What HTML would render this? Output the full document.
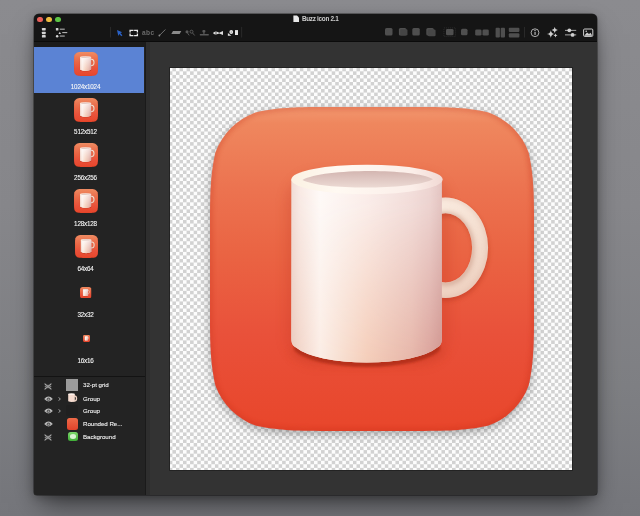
<!DOCTYPE html>
<html><head><meta charset="utf-8">
<style>
*{margin:0;padding:0;box-sizing:border-box}
html,body{width:640px;height:516px;overflow:hidden}
body{position:relative;font-family:"Liberation Sans",sans-serif;background:linear-gradient(180deg,#8b8b8f 0%,#87878b 40%,#7e7f83 75%,#75767b 100%)}
.abs{position:absolute}
#win{left:34px;top:14px;width:563px;height:481px;border-radius:5px 5px 3px 3px;background:#333;box-shadow:0 14px 26px -6px rgba(0,0,0,.55),0 2px 10px rgba(0,0,0,.25),0 0 0 0.5px rgba(0,0,0,.6);overflow:hidden}
#tb{left:0;top:0;width:563px;height:28px;background:#151515;border-bottom:1px solid #0b0b0b}
.tl{width:5.7px;height:5.7px;border-radius:50%}
#side{left:0;top:28px;width:111px;height:453px;background:#232323}
#sidetop{left:0;top:0;width:111px;height:5px;background:#1b1b1b}
#sel{left:0;top:5px;width:110px;height:46px;background:#5b83d4}
#divider{left:110.5px;top:28px;width:5px;height:453px;background:#2e2e2e;border-left:0.5px solid #1a1a1a}
#canvas{left:136px;top:54px;width:402px;height:402px;background-color:#fdfdfd;box-shadow:0 0 0 1px rgba(0,0,0,.3)}
#bigicon{left:39.5px;top:38.5px;width:324px;height:324px;filter:drop-shadow(0 3px 5px rgba(0,0,0,.3))}
.lbl{color:#f6f6f6;font-size:6.3px;letter-spacing:-0.2px;text-align:center;width:103px;left:0;line-height:8px;white-space:nowrap;-webkit-text-stroke:0.1px #f6f6f6;will-change:transform}
.lyr{color:#f0f0f0;font-size:6.2px;left:49.1px;line-height:8px;white-space:nowrap;-webkit-text-stroke:0.1px #f0f0f0;letter-spacing:-0.05px;will-change:transform}
</style></head><body>
<svg width="0" height="0" style="position:absolute">
<defs>
<linearGradient id="gBg" x1="0" y1="0" x2="0" y2="1">
<stop offset="0" stop-color="#f2976f"/><stop offset="0.05" stop-color="#ef875e"/><stop offset="0.25" stop-color="#ec7350"/><stop offset="0.45" stop-color="#ea6443"/><stop offset="0.7" stop-color="#e9513a"/><stop offset="1" stop-color="#e8462b"/>
</linearGradient>
<linearGradient id="gBody" x1="0" y1="0" x2="1" y2="0">
<stop offset="0" stop-color="#f1ddd6"/><stop offset="0.06" stop-color="#f9ebe6"/><stop offset="0.19" stop-color="#fefaf8"/><stop offset="0.5" stop-color="#fbefec"/><stop offset="0.8" stop-color="#f3dfdc"/><stop offset="0.92" stop-color="#eed6d3"/><stop offset="1" stop-color="#e4c6c3"/>
</linearGradient>
<linearGradient id="gBodyB" x1="0" y1="0" x2="1" y2="0">
<stop offset="0" stop-color="#eacabe"/><stop offset="0.06" stop-color="#f2d6ca"/><stop offset="0.19" stop-color="#fbece4"/><stop offset="0.35" stop-color="#f7dccd"/><stop offset="0.5" stop-color="#f4cdb9"/><stop offset="0.8" stop-color="#e6b5a8"/><stop offset="0.92" stop-color="#dba39b"/><stop offset="1" stop-color="#d0958f"/>
</linearGradient>
<linearGradient id="gMaskV" x1="0" y1="0" x2="0" y2="1">
<stop offset="0" stop-color="#000"/><stop offset="0.15" stop-color="#111"/><stop offset="1" stop-color="#fff"/>
</linearGradient>
<mask id="mBodyB" maskUnits="userSpaceOnUse" x="0" y="0" width="324" height="324"><rect x="81" y="72.5" width="152" height="184" fill="url(#gMaskV)"/></mask>
<linearGradient id="gRim" x1="0" y1="0" x2="1" y2="0">
<stop offset="0" stop-color="#fbf1e2"/><stop offset="0.3" stop-color="#fff9f2"/><stop offset="0.8" stop-color="#fbeee9"/><stop offset="1" stop-color="#f1d9d4"/>
</linearGradient>
<linearGradient id="gIn" x1="0" y1="0" x2="0" y2="1">
<stop offset="0" stop-color="#d3b6b1"/><stop offset="0.5" stop-color="#e0c8c3"/><stop offset="1" stop-color="#ecdad4"/>
</linearGradient>
<linearGradient id="gHandle" x1="0" y1="0" x2="0.4" y2="1">
<stop offset="0" stop-color="#fbefe5"/><stop offset="0.5" stop-color="#f5e1d3"/><stop offset="1" stop-color="#efd3c3"/>
</linearGradient>
<filter id="fb2" x="-30%" y="-30%" width="160%" height="160%"><feGaussianBlur stdDeviation="2"/></filter>
<filter id="fb4" x="-30%" y="-30%" width="160%" height="160%"><feGaussianBlur stdDeviation="4"/></filter>
<filter id="fb6" x="-30%" y="-30%" width="160%" height="160%"><feGaussianBlur stdDeviation="6"/></filter>
<filter id="fb1" x="-30%" y="-30%" width="160%" height="160%"><feGaussianBlur stdDeviation="1"/></filter>
<clipPath id="cSq"><path d="M110.06,0 L213.94,0 C245.63,0 261.48,1.59 278.53,5.39 C297.16,12.17 311.83,26.84 318.61,45.47 C322.41,62.52 324,78.37 324,110.06 L324,213.94 C324,245.63 322.41,261.48 318.61,278.53 C311.83,297.16 297.16,311.83 278.53,318.61 C261.48,322.41 245.63,324 213.94,324 L110.06,324 C78.37,324 62.52,322.41 45.47,318.61 C26.84,311.83 12.17,297.16 5.39,278.53 C1.59,261.48 0,245.63 0,213.94 L0,110.06 C0,78.37 1.59,62.52 5.39,45.47 C12.17,26.84 26.84,12.17 45.47,5.39 C62.52,1.59 78.37,0 110.06,0Z"/></clipPath>
<clipPath id="cRing"><path fill-rule="evenodd" d="M278.1,140.85 A42.6,50.25 0 1 1 192.9,140.85 A42.6,50.25 0 1 1 278.1,140.85Z M262.1,140.85 A26.6,34.55 0 1 0 208.9,140.85 A26.6,34.55 0 1 0 262.1,140.85Z"/></clipPath>
<symbol id="icon" viewBox="0 0 324 324">
<path d="M110.06,0 L213.94,0 C245.63,0 261.48,1.59 278.53,5.39 C297.16,12.17 311.83,26.84 318.61,45.47 C322.41,62.52 324,78.37 324,110.06 L324,213.94 C324,245.63 322.41,261.48 318.61,278.53 C311.83,297.16 297.16,311.83 278.53,318.61 C261.48,322.41 245.63,324 213.94,324 L110.06,324 C78.37,324 62.52,322.41 45.47,318.61 C26.84,311.83 12.17,297.16 5.39,278.53 C1.59,261.48 0,245.63 0,213.94 L0,110.06 C0,78.37 1.59,62.52 5.39,45.47 C12.17,26.84 26.84,12.17 45.47,5.39 C62.52,1.59 78.37,0 110.06,0Z" fill="url(#gBg)"/>
<g clip-path="url(#cSq)">
 <path d="M110.06,0 L213.94,0 C245.63,0 261.48,1.59 278.53,5.39 C297.16,12.17 311.83,26.84 318.61,45.47 C322.41,62.52 324,78.37 324,110.06 L324,213.94 C324,245.63 322.41,261.48 318.61,278.53 C311.83,297.16 297.16,311.83 278.53,318.61 C261.48,322.41 245.63,324 213.94,324 L110.06,324 C78.37,324 62.52,322.41 45.47,318.61 C26.84,311.83 12.17,297.16 5.39,278.53 C1.59,261.48 0,245.63 0,213.94 L0,110.06 C0,78.37 1.59,62.52 5.39,45.47 C12.17,26.84 26.84,12.17 45.47,5.39 C62.52,1.59 78.37,0 110.06,0Z" fill="none" stroke="#c22c17" stroke-width="6" opacity="0.25" filter="url(#fb2)"/>
 <path d="M40,1.5 L284,1.5" stroke="#f7a987" stroke-width="3" opacity="0.6" filter="url(#fb2)"/>
</g>
<rect x="76" y="66" width="164" height="192" rx="30" fill="#b9301a" opacity="0.22" filter="url(#fb6)"/>
<!-- handle shadow -->
<path fill-rule="evenodd" d="M279.1,143.85 A42.6,50.25 0 1 1 193.9,143.85 A42.6,50.25 0 1 1 279.1,143.85Z M263.1,143.85 A26.6,34.55 0 1 0 209.9,143.85 A26.6,34.55 0 1 0 263.1,143.85Z" fill="#a82a14" opacity="0.35" filter="url(#fb2)"/>
<!-- handle -->
<path fill-rule="evenodd" d="M278.1,140.85 A42.6,50.25 0 1 1 192.9,140.85 A42.6,50.25 0 1 1 278.1,140.85Z M262.1,140.85 A26.6,34.55 0 1 0 208.9,140.85 A26.6,34.55 0 1 0 262.1,140.85Z" fill="url(#gHandle)"/>
<g clip-path="url(#cRing)">
 <ellipse cx="235.5" cy="141.85" rx="26.6" ry="34.55" fill="none" stroke="#c08b77" stroke-width="5" opacity="0.5" filter="url(#fb2)"/>
 <ellipse cx="235.5" cy="140.85" rx="42.6" ry="50.25" fill="none" stroke="#d9ad9b" stroke-width="3" opacity="0.5" filter="url(#fb2)"/>
</g>
<!-- mug shadow -->
<path d="M84,237 A75.6,23 0 0 0 230,237 L230,243 A75.6,23 0 0 1 84,243Z" fill="#9c240f" opacity="0.6" filter="url(#fb1)"/>
<ellipse cx="158" cy="246" rx="78" ry="12" fill="#b2301a" opacity="0.15" filter="url(#fb4)"/>
<!-- body -->
<path id="bodyP" d="M81.3,72.5 L81.3,231 C81.3,236 82.5,238.5 86,240.5 A75.3,23 0 0 0 227.3,240.5 C230.7,238.5 231.9,236 231.9,231 L231.9,72.5Z" fill="url(#gBody)"/>
<path d="M81.3,72.5 L81.3,231 C81.3,236 82.5,238.5 86,240.5 A75.3,23 0 0 0 227.3,240.5 C230.7,238.5 231.9,236 231.9,231 L231.9,72.5Z" fill="url(#gBodyB)" mask="url(#mBodyB)"/>
<!-- rim -->
<ellipse cx="157" cy="72.5" rx="75.65" ry="14.8" fill="url(#gRim)"/>
<path d="M92.5,73 C112,61.5 203,61 223,72.2 C203,83 112,83.5 92.5,73Z" fill="url(#gIn)"/>
</symbol>
</defs></svg>

<div id="win" class="abs">
  <div id="tb" class="abs">
<div class="abs tl" style="left:3.3px;top:2.65px;background:#e9605a"></div>
<div class="abs tl" style="left:12.2px;top:2.65px;background:#ecbb40"></div>
<div class="abs tl" style="left:21.1px;top:2.65px;background:#5cc545"></div>
<svg class="abs" style="left:0;top:0;width:563px;height:28px;will-change:transform" viewBox="0 0 563 28">
 <defs><filter id="tbb" x="-50%" y="-50%" width="200%" height="200%"><feGaussianBlur stdDeviation="0.6"/></filter></defs>
 <g fill="#d4d4d4">
  <rect x="7.9" y="13.9" width="3.8" height="2.5" rx="0.6"/>
  <rect x="7.9" y="17.7" width="3.8" height="2.5" rx="0.6"/>
  <rect x="7.9" y="21.1" width="3.8" height="2.5" rx="0.6"/>
  <rect x="21.9" y="13.9" width="2.5" height="2.5" rx="0.5"/>
  <rect x="25.75" y="14.7" width="5" height="0.9"/>
  <path d="M24.5,19.9 L25.75,17.7 L27,19.9Z"/>
  <rect x="28.25" y="18.2" width="5" height="0.9"/>
  <circle cx="23.15" cy="22.35" r="1.25"/>
  <rect x="25.75" y="21.6" width="5" height="0.9"/>
 </g>
 <rect x="76.3" y="12.9" width="0.7" height="10.6" fill="#333"/>
 <path d="M83,16 L88.2,18.2 L86.3,19.1 L88.4,21.3 L87.4,22.2 L85.3,20 L84.3,21.9Z" fill="#2a62c8"/>
 <path d="M96.1,18.6 V16.4 H99.5 M100.1,16.4 H103.4 V18.6 M103.4,19.4 V21.6 H100.1 M99.5,21.6 H96.1 V19.4" fill="none" stroke="#ececec" stroke-width="1.3"/>
 <text x="107.9" y="21.4" font-family="Liberation Sans" font-weight="bold" font-size="6.6" fill="#6a6a6a" letter-spacing="0.5">abc</text>
 <path d="M125.3,21.6 L131.4,15.5" stroke="#7a7a7a" stroke-width="0.9"/>
 <circle cx="125.4" cy="21.5" r="0.9" fill="#8a8a8a"/>
 <path d="M137.3,20 L145.6,20 L147.3,17 L139,17Z" fill="#8a8a8a"/>
 <g fill="none" stroke="#585858" stroke-width="1">
  <circle cx="157.5" cy="17.7" r="1.5"/><path d="M158.6,19 L160.7,21.5"/>
 </g>
 <circle cx="153" cy="17.7" r="1.5" fill="#585858"/><path d="M153.5,19 L155.2,21.4" stroke="#585858" stroke-width="1"/>
 <g fill="#585858">
  <rect x="168.4" y="16.1" width="3" height="2.3" rx="1"/>
  <rect x="169.3" y="18" width="1.2" height="2.2"/>
  <rect x="165.8" y="19.9" width="9" height="1.5" rx="0.4"/>
 </g>
 <path d="M178.9,19 Q181,16.6 183.8,18 L185.2,18.8 L189,16.9 L189,21 L185.2,19.4 L183.8,20.1 Q181,21.4 178.9,19Z" fill="#dcdcdc"/>
 <circle cx="182" cy="19" r="0.7" fill="#333"/>
 <path d="M193.9,19.1 L193.9,21.75 L197.3,21.75Z" fill="#e6e6e6"/>
 <circle cx="197.25" cy="18" r="1.9" fill="#e6e6e6"/><circle cx="197.25" cy="18" r="0.6" fill="#777"/>
 <rect x="201" y="16.1" width="3" height="4.9" fill="#e6e6e6"/>
 <rect x="207.4" y="12.9" width="0.7" height="10.6" fill="#333"/>
 <g fill="#4f4f4f" filter="url(#tbb)">
  <rect x="351" y="13.9" width="7.5" height="7.5" rx="1.5"/>
  <rect x="364.9" y="13.9" width="7.5" height="7.5" rx="1.5"/><rect x="366.2" y="15.2" width="7.3" height="6.3" rx="1.3" fill="#444"/>
  <rect x="378.3" y="13.9" width="7.5" height="7.5" rx="1.5"/>
  <rect x="392.3" y="13.9" width="7.5" height="7.5" rx="1.5"/><rect x="393.8" y="15.5" width="7.8" height="6.8" rx="1.3" fill="#474747"/>
  <rect x="412" y="15" width="7.5" height="6.3" rx="1.3"/>
  <rect x="427" y="14.8" width="6.5" height="6.5" rx="1.5"/>
  <rect x="441.2" y="15.4" width="6.3" height="6.2" rx="1.3"/><rect x="448.5" y="15.4" width="6.3" height="6.2" rx="1.3"/>
  <rect x="461.6" y="13.8" width="4.3" height="9.6" rx="1"/><rect x="466.7" y="13.8" width="4.3" height="9.6" rx="1"/>
  <rect x="474.8" y="13.8" width="10.6" height="4.3" rx="1"/><rect x="474.8" y="19.2" width="10.6" height="4.3" rx="1"/>
 </g>
 <g fill="none" stroke="#3a3a3a" stroke-width="0.6" stroke-dasharray="1 1">
  <rect x="409.9" y="13.9" width="11.5" height="8.5"/>
 </g>
 <rect x="490.1" y="12.9" width="0.7" height="10.6" fill="#333"/>
 <circle cx="501" cy="18.7" r="3.9" fill="none" stroke="#c8c8c8" stroke-width="0.85"/>
 <rect x="500.5" y="17.8" width="1.1" height="3.1" fill="#c8c8c8"/><circle cx="501" cy="16.4" r="0.65" fill="#c8c8c8"/>
 <g fill="#cfcfcf">
  <path d="M516.5,17.5 Q517,21 520.5,21.3 Q517,21.6 516.5,25 Q516,21.6 512.3,21.3 Q516,21 516.5,17.5Z" transform="translate(0.3,-1.2)"/>
  <path d="M520.7,12.9 Q521,15.6 523.8,15.9 Q521,16.2 520.7,18.9 Q520.4,16.2 517.6,15.9 Q520.4,15.6 520.7,12.9Z"/>
  <path d="M521.5,19.6 Q521.7,21.3 523.5,21.5 Q521.7,21.7 521.5,23.5 Q521.3,21.7 519.5,21.5 Q521.3,21.3 521.5,19.6Z"/>
 </g>
 <g fill="#cfcfcf">
  <rect x="531" y="15.9" width="11.2" height="0.8"/><circle cx="535.3" cy="16.3" r="1.9"/>
  <rect x="531" y="20.5" width="11.2" height="0.8"/><circle cx="538.6" cy="20.9" r="1.9"/>
 </g>
 <rect x="549.6" y="15" width="9.2" height="7.4" rx="1" fill="none" stroke="#cfcfcf" stroke-width="1"/>
 <path d="M550.2,21.8 L553,18.5 L555,20 L556.5,18.8 L558.3,21.8Z" fill="#cfcfcf"/><circle cx="552.2" cy="17.3" r="0.8" fill="#cfcfcf"/>
 <path d="M259.4,1.6 L263,1.6 L265,3.6 L265,7.9 L259.4,7.9Z" fill="#e8e8e8"/>
 <text x="267.9" y="7.25" font-family="Liberation Sans" font-weight="bold" font-size="6.4" fill="#cdcdcd" letter-spacing="-0.3">Buzz icon 2.1</text>
</svg>
</div>
  <div id="side" class="abs">
    <div id="sidetop" class="abs"></div>
    <div id="sel" class="abs"></div>
    <div class="abs" style="left:0;top:-28px;width:111px;height:481px">
<svg class="abs" style="left:40.0px;top:38px;width:24px;height:24px" viewBox="0 0 324 324"><use href="#icon"/></svg>
<div class="abs lbl" style="top:68.57px">1024x1024</div>
<svg class="abs" style="left:40.0px;top:83.7px;width:24px;height:24px" viewBox="0 0 324 324"><use href="#icon"/></svg>
<div class="abs lbl" style="top:114.22px">512x512</div>
<svg class="abs" style="left:40.0px;top:129.4px;width:24px;height:24px" viewBox="0 0 324 324"><use href="#icon"/></svg>
<div class="abs lbl" style="top:159.92px">256x256</div>
<svg class="abs" style="left:40.0px;top:175.1px;width:24px;height:24px" viewBox="0 0 324 324"><use href="#icon"/></svg>
<div class="abs lbl" style="top:205.62px">128x128</div>
<svg class="abs" style="left:40.5px;top:220.9px;width:23px;height:23px" viewBox="0 0 324 324"><use href="#icon"/></svg>
<div class="abs lbl" style="top:251.27px">64x64</div>
<svg class="abs" style="left:46.25px;top:272.85px;width:11.5px;height:11.5px" viewBox="0 0 324 324"><use href="#icon"/></svg>
<div class="abs lbl" style="top:296.92px">32x32</div>
<svg class="abs" style="left:48.5px;top:320.8px;width:7px;height:7px" viewBox="0 0 324 324"><use href="#icon"/></svg>
<div class="abs lbl" style="top:342.62px">16x16</div>

<div class="abs" style="left:0;top:361.5px;width:111px;height:1px;background:#131313"></div>
<svg class="abs" style="left:9.95px;top:368.79999999999995px;width:8px;height:7px" viewBox="0 0 8 7"><path d="M0.6,0.6 L7.4,6.4 M7.4,0.6 L0.6,6.4" fill="none" stroke="#b0b0b0" stroke-width="1.1"/><path d="M0.8,3.5 Q4,0.6 7.2,3.5 Q4,6.4 0.8,3.5Z" fill="#777" fill-opacity="0.5" stroke="#999" stroke-width="0.7"/></svg>
<div class="abs" style="left:32.4px;top:365.3px;width:12px;height:11.3px;background:#9b9b9b"></div>
<div class="abs lyr" style="top:367.4px">32-pt grid</div>
<svg class="abs" style="left:9.6px;top:381.5px;width:9px;height:6px" viewBox="0 0 9 6"><path d="M0.2,3 Q4.5,-1.8 8.8,3 Q4.5,7.8 0.2,3Z" fill="#b9b9b9"/><circle cx="4.5" cy="3.3" r="1.7" fill="#505050"/><circle cx="4.5" cy="3.5" r="0.9" fill="#9a9a9a"/></svg>
<svg class="abs" style="left:24.3px;top:382.5px;width:3px;height:4px" viewBox="0 0 3 4"><path d="M0.5,0.4 L2.4,2 L0.5,3.6" fill="none" stroke="#b0b0b0" stroke-width="0.9" stroke-linejoin="miter"/></svg>
<svg class="abs" style="left:34px;top:379px;width:10px;height:9.5px" viewBox="0 0 10 9.5"><path fill-rule="evenodd" d="M6,2.2 A3.2,3.3 0 1 1 6,8.8 A3.2,3.3 0 1 1 6,2.2Z M6,3.5 A1.9,2 0 1 0 6,7.5 A1.9,2 0 1 0 6,3.5Z" fill="#f0d3c4"/><path d="M0.2,1 L6.8,1 L6.8,8.3 Q3.5,9.6 0.2,8.3Z" fill="#f6dcd0"/><ellipse cx="3.5" cy="1.1" rx="3.3" ry="0.9" fill="#fff4ee"/></svg>
<div class="abs lyr" style="top:380.5px">Group</div>
<svg class="abs" style="left:9.6px;top:394.3px;width:9px;height:6px" viewBox="0 0 9 6"><path d="M0.2,3 Q4.5,-1.8 8.8,3 Q4.5,7.8 0.2,3Z" fill="#b9b9b9"/><circle cx="4.5" cy="3.3" r="1.7" fill="#505050"/><circle cx="4.5" cy="3.5" r="0.9" fill="#9a9a9a"/></svg>
<svg class="abs" style="left:24.3px;top:395.3px;width:3px;height:4px" viewBox="0 0 3 4"><path d="M0.5,0.4 L2.4,2 L0.5,3.6" fill="none" stroke="#b0b0b0" stroke-width="0.9" stroke-linejoin="miter"/></svg>
<div class="abs" style="left:32.4px;top:391px;width:12px;height:11.4px;background:#202020;border-radius:2px"></div>
<div class="abs lyr" style="top:393.3px">Group</div>
<svg class="abs" style="left:9.6px;top:407.4px;width:9px;height:6px" viewBox="0 0 9 6"><path d="M0.2,3 Q4.5,-1.8 8.8,3 Q4.5,7.8 0.2,3Z" fill="#b9b9b9"/><circle cx="4.5" cy="3.3" r="1.7" fill="#505050"/><circle cx="4.5" cy="3.5" r="0.9" fill="#9a9a9a"/></svg>
<div class="abs" style="left:32.6px;top:404px;width:11.8px;height:11.6px;background:linear-gradient(#ee6a48,#e2432b);border-radius:2.5px"></div>
<div class="abs lyr" style="top:406.4px">Rounded Re...</div>
<svg class="abs" style="left:9.95px;top:420.0px;width:8px;height:7px" viewBox="0 0 8 7"><path d="M0.6,0.6 L7.4,6.4 M7.4,0.6 L0.6,6.4" fill="none" stroke="#b0b0b0" stroke-width="1.1"/><path d="M0.8,3.5 Q4,0.6 7.2,3.5 Q4,6.4 0.8,3.5Z" fill="#777" fill-opacity="0.5" stroke="#999" stroke-width="0.7"/></svg>
<div class="abs" style="left:33.5px;top:417.5px;width:10.3px;height:9.5px;background:linear-gradient(#7bd86b,#3fae37);border-radius:2.5px"><div class="abs" style="left:2.2px;top:2.5px;width:6px;height:4.5px;border-radius:50%;background:#d8f3d2"></div></div>
<div class="abs lyr" style="top:418.6px">Background</div>

    </div>
  </div>
  <div id="divider" class="abs"></div>
  <div id="canvas" class="abs"><svg class="abs" style="left:0;top:0" width="402" height="402"><defs><pattern id="chk" patternUnits="userSpaceOnUse" x="2.4" y="-0.2" width="7.08" height="7.08"><rect x="0" y="0" width="3.54" height="3.54" fill="#d2d2d2"/><rect x="3.54" y="3.54" width="3.54" height="3.54" fill="#d2d2d2"/></pattern></defs><rect width="402" height="402" fill="url(#chk)"/></svg><svg id="bigicon" class="abs" viewBox="0 0 324 324"><use href="#icon"/></svg></div>
</div>
</body></html>
